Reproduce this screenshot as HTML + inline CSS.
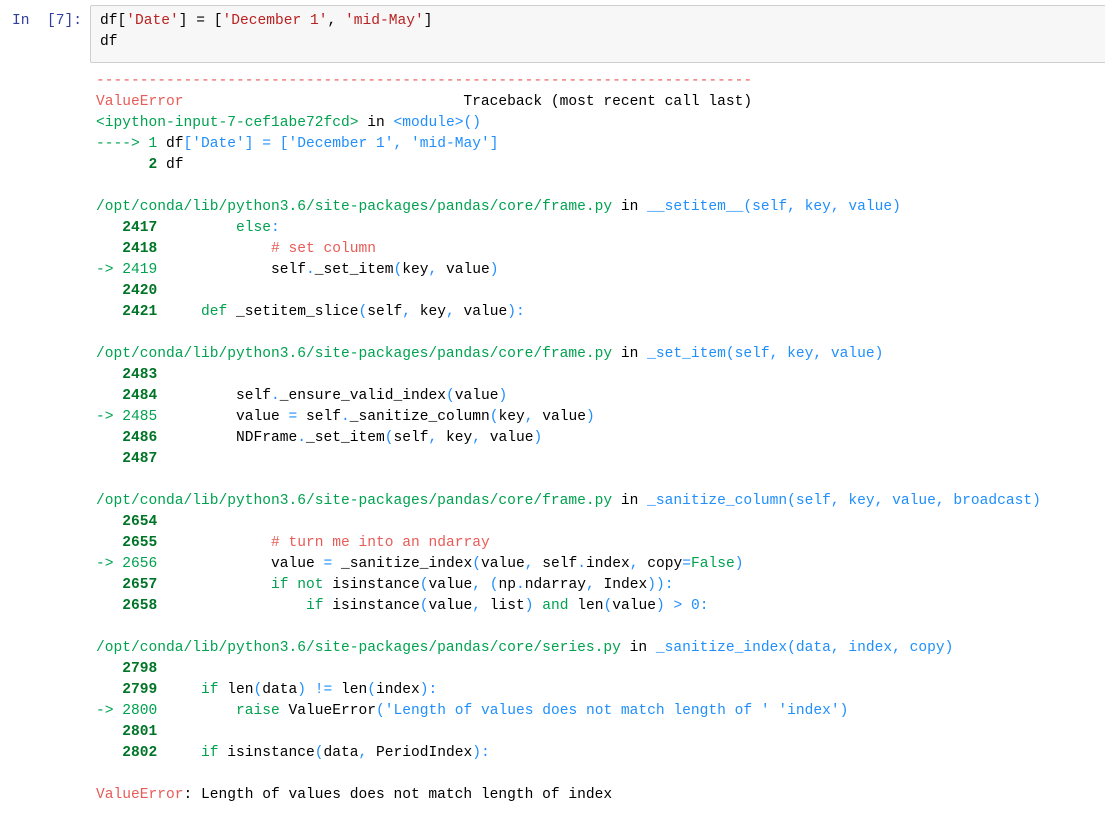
<!DOCTYPE html>
<html><head><meta charset="utf-8"><style>
body{margin:0;background:#fff;width:1105px;height:815px;overflow:hidden;font-family:"Liberation Mono",monospace;font-size:14.58px;color:#000}
.p{position:absolute;}
pre{margin:0;font:inherit;line-height:21px;white-space:pre}
.r{color:#e75c58}.g{color:#00a250}.b{color:#208ffb}.n{color:#007427;font-weight:bold}.k{color:#008000}.s{color:#ba2121}.pr{color:#303f9f}
</style></head><body>
<div class="p pr" style="left:12px;top:11px;line-height:21px">In&nbsp; [7]:</div>
<div class="p" style="left:90px;top:5px;width:1020px;height:56px;background:#f7f7f7;border:1px solid #cfcfcf;border-radius:2px"></div>
<pre class="p" style="left:100px;top:11px">df[<span class="s">'Date'</span>] = [<span class="s">'December 1'</span>, <span class="s">'mid-May'</span>]
df</pre>
<pre class="p" style="left:96px;top:71px"><span class="r">---------------------------------------------------------------------------</span>
<span class="r">ValueError</span>                                Traceback (most recent call last)
<span class="g">&lt;ipython-input-7-cef1abe72fcd&gt;</span> in <span class="b">&lt;module&gt;</span><span class="b">()</span>
<span class="g">----&gt; 1</span> df<span class="b">['Date']</span> <span class="b">=</span> <span class="b">['December 1', 'mid-May']</span>
<span class="n">      2</span> df

<span class="g">/opt/conda/lib/python3.6/site-packages/pandas/core/frame.py</span> in <span class="b">__setitem__</span><span class="b">(self, key, value)</span>
<span class="n">   2417</span>         <span class="g">else</span><span class="b">:</span>
<span class="n">   2418</span>             <span class="r"># set column</span>
<span class="g">-&gt; 2419</span>             self<span class="b">.</span>_set_item<span class="b">(</span>key<span class="b">,</span> value<span class="b">)</span>
<span class="n">   2420</span> 
<span class="n">   2421</span>     <span class="g">def</span> _setitem_slice<span class="b">(</span>self<span class="b">,</span> key<span class="b">,</span> value<span class="b">):</span>

<span class="g">/opt/conda/lib/python3.6/site-packages/pandas/core/frame.py</span> in <span class="b">_set_item</span><span class="b">(self, key, value)</span>
<span class="n">   2483</span> 
<span class="n">   2484</span>         self<span class="b">.</span>_ensure_valid_index<span class="b">(</span>value<span class="b">)</span>
<span class="g">-&gt; 2485</span>         value <span class="b">=</span> self<span class="b">.</span>_sanitize_column<span class="b">(</span>key<span class="b">,</span> value<span class="b">)</span>
<span class="n">   2486</span>         NDFrame<span class="b">.</span>_set_item<span class="b">(</span>self<span class="b">,</span> key<span class="b">,</span> value<span class="b">)</span>
<span class="n">   2487</span> 

<span class="g">/opt/conda/lib/python3.6/site-packages/pandas/core/frame.py</span> in <span class="b">_sanitize_column</span><span class="b">(self, key, value, broadcast)</span>
<span class="n">   2654</span> 
<span class="n">   2655</span>             <span class="r"># turn me into an ndarray</span>
<span class="g">-&gt; 2656</span>             value <span class="b">=</span> _sanitize_index<span class="b">(</span>value<span class="b">,</span> self<span class="b">.</span>index<span class="b">,</span> copy<span class="b">=</span><span class="g">False</span><span class="b">)</span>
<span class="n">   2657</span>             <span class="g">if</span> <span class="g">not</span> isinstance<span class="b">(</span>value<span class="b">,</span> <span class="b">(</span>np<span class="b">.</span>ndarray<span class="b">,</span> Index<span class="b">)):</span>
<span class="n">   2658</span>                 <span class="g">if</span> isinstance<span class="b">(</span>value<span class="b">,</span> list<span class="b">)</span> <span class="g">and</span> len<span class="b">(</span>value<span class="b">)</span> <span class="b">&gt;</span> <span class="b">0:</span>

<span class="g">/opt/conda/lib/python3.6/site-packages/pandas/core/series.py</span> in <span class="b">_sanitize_index</span><span class="b">(data, index, copy)</span>
<span class="n">   2798</span> 
<span class="n">   2799</span>     <span class="g">if</span> len<span class="b">(</span>data<span class="b">)</span> <span class="b">!=</span> len<span class="b">(</span>index<span class="b">):</span>
<span class="g">-&gt; 2800</span>         <span class="g">raise</span> ValueError<span class="b">('Length of values does not match length of ' 'index')</span>
<span class="n">   2801</span> 
<span class="n">   2802</span>     <span class="g">if</span> isinstance<span class="b">(</span>data<span class="b">,</span> PeriodIndex<span class="b">):</span>

<span class="r">ValueError</span>: Length of values does not match length of index</pre>
</body></html>
